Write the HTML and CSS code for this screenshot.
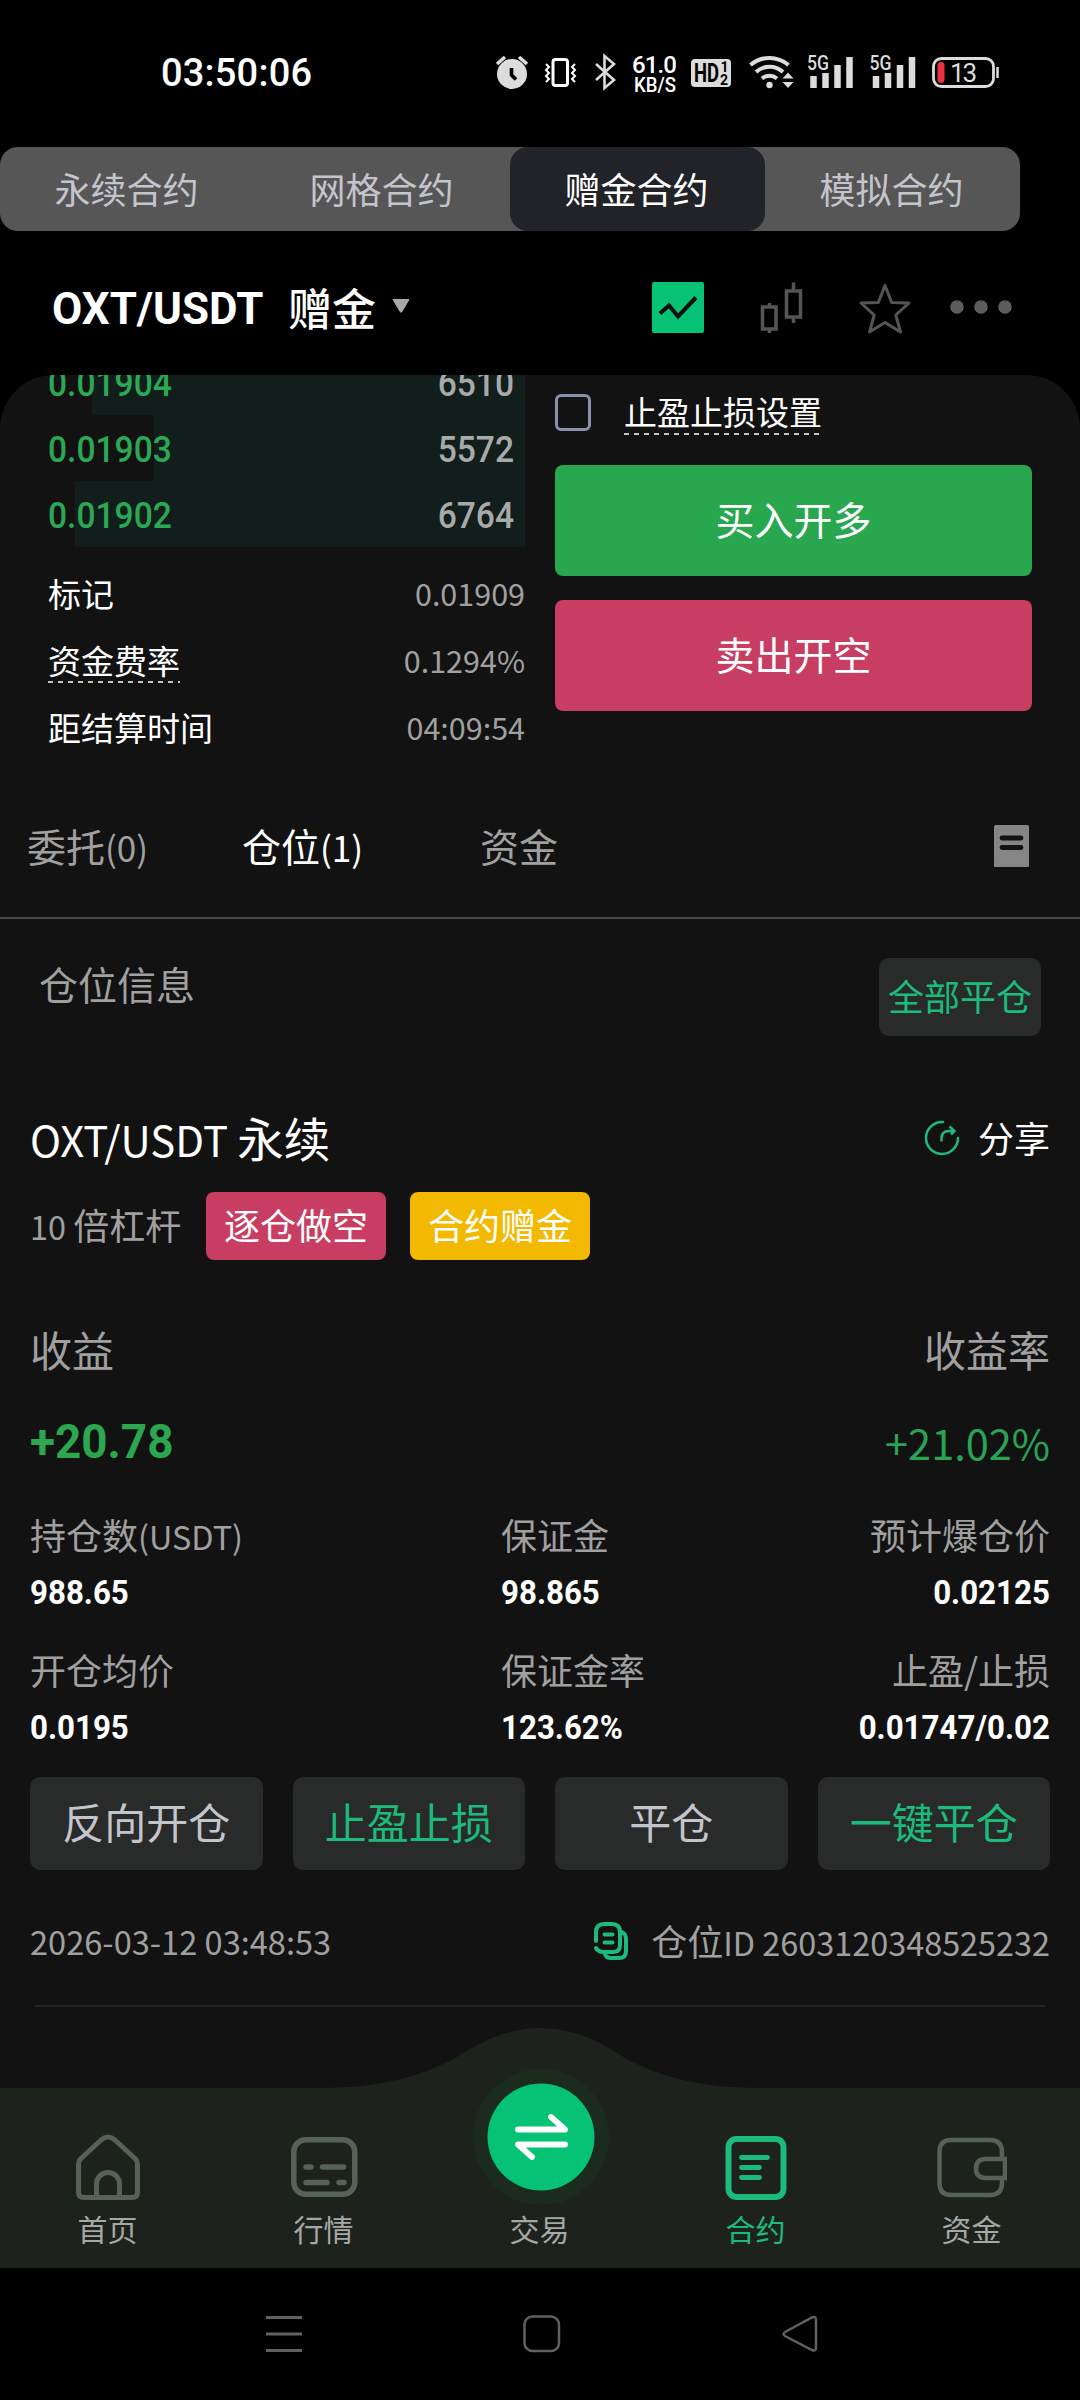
FILE: index.html
```html
<!DOCTYPE html>
<html lang="zh-CN">
<head>
<meta charset="utf-8">
<title>OXT/USDT 赠金</title>
<link rel="stylesheet" href="styles.css">
</head>
<body>
<header class="status">
  <span class="clock">03:50:06</span>
  <svg class="status-icons" viewBox="490 45 520 55" width="520" height="55">
    <g fill="#dcdcdc">
      <circle cx="512" cy="74" r="15"/>
      <path d="M497 64l8-7M527 64l-8-7" stroke="#dcdcdc" stroke-width="3.6" fill="none"/>
      <path d="M511.500 68v7l4.500 4.500" stroke="#000" stroke-width="3.600" fill="none"/>
    </g>
    <rect x="553" y="59.500" width="14.500" height="26" rx="2.500" fill="none" stroke="#fff" stroke-width="3"/>
    <path d="M546 64l3 3-3 3 3 3-3 3 3 3-3 3M575 64l-3 3 3 3-3 3 3 3-3 3 3 3" fill="none" stroke="#fff" stroke-width="2"/>
    <path d="M596 64l18 16-9.500 8V56l9.500 8-18 16" fill="none" stroke="#dcdcdc" stroke-width="2.600"/>
    <text class="t-speed" x="632" y="73" textLength="45">61.0</text>
    <text class="t-unit" x="634" y="91.500" textLength="42" lengthAdjust="spacingAndGlyphs">KB/S</text>
    <rect x="691" y="59" width="40" height="28" rx="4" fill="#dcdcdc"/>
    <text class="t-hd" x="694" y="82" textLength="25" lengthAdjust="spacingAndGlyphs">HD</text>
    <text class="t-sub" x="720.500" y="72">1</text>
    <text class="t-sub" x="720" y="85">2</text>
    <g fill="none" stroke="#dcdcdc" stroke-width="4">
      <path d="M750.500 65a29 29 0 0 1 38 0"/>
      <path d="M756 72a20 20 0 0 1 27 0"/>
      <path d="M762 78.500a12 12 0 0 1 15 0"/>
    </g>
    <circle cx="769.500" cy="85" r="3.200" fill="#dcdcdc"/>
    <path d="M782.500 78.500h11l-5.500-6zM782.500 82h11l-5.500 6z" fill="#dcdcdc"/>
    <g id="signal">
      <text class="t-5g" x="807" y="70" textLength="22" lengthAdjust="spacingAndGlyphs">5G</text>
      <path d="M813.500 76v12M825.500 73v15M837.500 65v23M849.500 57v31" stroke="#dcdcdc" stroke-width="6.500"/>
    </g>
    <use href="#signal" x="62.500"/>
    <rect x="933.500" y="58.500" width="60" height="28" rx="8" fill="none" stroke="#dcdcdc" stroke-width="2.800"/>
    <rect x="937.500" y="62" width="7" height="21" rx="3.500" fill="#ee2e42"/>
    <path d="M997.500 67v11" stroke="#dcdcdc" stroke-width="2.500"/>
    <text class="t-batt" x="950" y="81.500" textLength="27">13</text>
  </svg>
</header>

<nav class="modes">
  <span class="mode">永续合约</span>
  <span class="mode">网格合约</span>
  <span class="mode mode-on">赠金合约</span>
  <span class="mode">模拟合约</span>
</nav>

<section class="symbol">
  <span class="pair din">OXT/USDT</span>
  <span class="bonus">赠金</span>
  <svg class="caret" width="20" height="16" viewBox="0 0 20 16"><path d="M2 1.500h16l-7 12q-1 1.500-2 0z" fill="#a8a8a8" stroke="#a8a8a8" stroke-linejoin="round"/></svg>
  <svg class="tools" width="370" height="60" viewBox="650 276 370 60">
    <rect x="652" y="281" width="52" height="51" rx="2" fill="#05c274"/>
    <path d="M660 312.500l9-8 9 11 18-19" fill="none" stroke="#0c0f0d" stroke-width="4"/>
    <g fill="none" stroke="#555" stroke-width="3.500">
      <path d="M762.500 306h13.500v22h-13.500zM769.500 302v4M769.500 328v4M786.500 290h14v26h-14zM793.500 281.500v9M793.500 316v6"/>
      <path d="M885 284.500l6.700 17 17.300.5-13.200 12 4.700 17-15.500-9.500-15.500 9.500 4.700-17-13.200-12 17.300-.5z" stroke-width="3" stroke-linejoin="round"/>
    </g>
    <g fill="#5d5d5d"><circle cx="957" cy="306" r="6.800"/><circle cx="981" cy="306" r="6.800"/><circle cx="1005" cy="306" r="6.800"/></g>
  </svg>
</section>

<main class="panel">
  <section class="trade">
    <div class="book">
      <div class="level" style="background-size:433px 100%"><span class="din price">0.01904</span><span class="din qty">6510</span></div>
      <div class="level" style="background-size:371px 100%"><span class="din price">0.01903</span><span class="din qty">5572</span></div>
      <div class="level" style="background-size:450px 100%"><span class="din price">0.01902</span><span class="din qty">6764</span></div>
      <dl class="info">
        <div><dt>标记</dt><dd>0.01909</dd></div>
        <div><dt><span class="hint">资金费率</span></dt><dd>0.1294%</dd></div>
        <div><dt>距结算时间</dt><dd>04:09:54</dd></div>
      </dl>
    </div>
    <div class="order">
      <label class="tpsl"><i class="box"></i><span class="hint">止盈止损设置</span></label>
      <button class="buy">买入开多</button>
      <button class="sell">卖出开空</button>
    </div>
  </section>

  <nav class="tabs">
    <span class="tab">委托<span class="lat">(0)</span></span>
    <span class="tab tab-on">仓位<span class="lat">(1)</span></span>
    <span class="tab">资金</span>
    <svg class="orders" width="35" height="42" viewBox="0 0 35 42"><rect width="35" height="42" rx="1.500" fill="#858585"/><path d="M8 13h19M8 22.500h19" stroke="#121212" stroke-width="4.800" stroke-linecap="round"/></svg>
  </nav>

  <div class="list-head">
    <span class="list-title">仓位信息</span>
    <button class="close-all">全部平仓</button>
  </div>

  <article class="card">
    <div class="title">
      <span><span class="lat">OXT/USDT </span>永续</span>
      <span class="share">
        <svg width="36" height="36" viewBox="0 0 36 36" fill="none" stroke="#1cba7b" stroke-width="2.500"><path d="M19 2A16 16 0 1 0 34 18" stroke-linecap="round"/><path d="M17.500 21.500v-3q0-7.500 7.500-7.500h4M25.500 6.500l5 4.500-3.500 3.500"/></svg>
        <span>分享</span>
      </span>
    </div>
    <div class="tags">
      <span class="lever"><span class="lat">10 </span>倍杠杆</span>
      <span class="tag tag-short">逐仓做空</span>
      <span class="tag tag-bonus">合约赠金</span>
    </div>
    <div class="pnl-head"><span>收益</span><span>收益率</span></div>
    <div class="pnl"><span class="din gain">+20.78</span><span class="rate">+21.02%</span></div>
    <div class="stats">
      <div><p>持仓数<span class="lat">(USDT)</span></p><b class="din">988.65</b></div>
      <div><p>保证金</p><b class="din">98.865</b></div>
      <div><p>预计爆仓价</p><b class="din">0.02125</b></div>
      <div><p>开仓均价</p><b class="din">0.0195</b></div>
      <div><p>保证金率</p><b class="din">123.62%</b></div>
      <div><p>止盈/止损</p><b class="din">0.01747/0.02</b></div>
    </div>
    <div class="actions">
      <button>反向开仓</button>
      <button class="accent">止盈止损</button>
      <button>平仓</button>
      <button class="accent">一键平仓</button>
    </div>
    <div class="meta">
      <span class="date">2026-03-12 03:48:53</span>
      <span class="pid">
        <svg width="36" height="40" viewBox="0 0 36 40" fill="none" stroke="#1cba7b" stroke-width="4" stroke-linecap="round"><path d="M3 20V11q0-8 8-8h8q8 0 8 8v13q0 7-7 7h-9q-6 0-8-4"/><path d="M29 11q4 2 4 7v12q0 7-7 7h-8q-5 0-6-4"/><path d="M11.500 13.500h8M11.500 21.500h8"/></svg>
        <span>仓位<span class="lat">ID 2603120348525232</span></span>
      </span>
    </div>
    <hr>
  </article>
</main>

<nav class="dock">
  <svg class="hump" width="1080" height="60" viewBox="0 0 1080 60"><path d="M320 60C378 60 420 49 455 30C485 11 510 0 540 0S597 11 625 30C660 49 702 60 760 60z" fill="#1d221d"/></svg>
  <div class="item">
    <svg width="70" height="70" viewBox="0 0 70 70" fill="none" stroke="#566256" stroke-width="5"><path d="M5.500 31q0-3 2-5L28 7q7-6 14 0l20.500 19q2 2 2 5v28q0 5.500-5.500 5.500H11Q5.500 64.500 5.500 59z"/><path d="M23.500 64V51a11.500 11.500 0 0 1 23 0v13"/></svg>
    <span>首页</span>
  </div>
  <div class="item">
    <svg width="70" height="70" viewBox="0 0 70 70" fill="none" stroke="#566256" stroke-width="5.500"><rect x="4.800" y="6.800" width="61" height="54.500" rx="12"/><path d="M17 34h5M33.500 34h21M17 49.500h21M50 49.500h5" stroke-linecap="round"/></svg>
    <span>行情</span>
  </div>
  <div class="item">
    <svg class="swap" width="140" height="140" viewBox="-71 -71 140 140"><circle r="68" fill="#1b2b1e"/><circle r="53.500" fill="#05c274"/><path d="M-23-7.500H24L10-20M24 7.500H-23L-9 20" fill="none" stroke="#fff" stroke-width="5.800" stroke-linecap="round" stroke-linejoin="round"/></svg>
    <span>交易</span>
  </div>
  <div class="item item-on">
    <svg width="70" height="70" viewBox="0 0 70 70" fill="none" stroke="#1cba7b" stroke-width="6"><rect x="7.500" y="6" width="55" height="58" rx="8"/><path d="M20.500 24.500h26M20.500 34.500h18M20.500 44.500h18" stroke-width="4.800" stroke-linecap="round"/></svg>
    <span>合约</span>
  </div>
  <div class="item">
    <svg width="70" height="70" viewBox="1 0 70 70" fill="none" stroke="#566256" stroke-width="4.500"><path d="M66 26v-7q0-12-12-12H15Q3.500 7 3.500 19v31q0 12 11.500 12h39q12 0 12-12v-4"/><path d="M69 26H50q-10 0-10 9.500t10 9.500h19z"/></svg>
    <span>资金</span>
  </div>
</nav>

<footer class="sysnav">
  <svg width="38" height="38" viewBox="0 0 38 38" stroke="#606060" stroke-width="3"><path d="M1 2.500h36M1 19h36M1 35.500h36"/></svg>
  <svg width="38" height="38" viewBox="0 0 38 38" fill="none" stroke="#606060" stroke-width="2.500"><rect x="1.500" y="1.500" width="34.500" height="34.500" rx="8"/></svg>
  <svg width="38" height="38" viewBox="0 0 38 38" fill="none" stroke="#606060" stroke-width="2.500"><path d="M4 17L31 2.500q4-1.500 4 2V33q0 3.500-4 2L4 21q-3-2 0-4z"/></svg>
</footer>
</body>
</html>
```
FILE: styles.css
```css
* { box-sizing: border-box; }
body {
  margin: 0;
  width: 1080px;
  height: 2400px;
  background: #000;
  color: #fff;
  font-family: "Noto Sans CJK SC", sans-serif;
  overflow: hidden;
}
button {
  border: 0;
  padding: 0;
  font: inherit;
  color: #fff;
}
svg { flex: none; }
p, dl, dd { margin: 0; }
.din {
  font-family: Roboto, sans-serif;
  display: inline-block;
  transform: scaleX(.92);
  transform-origin: left center;
}
.lat { font-size: .9em; line-height: 1; }

.status { height: 147px; display: flex; padding-left: 161px; }
.clock {
  width: 329px;
  margin-top: 50px;
  font: 500 38px/46px Roboto, sans-serif;
  letter-spacing: .2px;
}
.status-icons { margin-top: 45px; }
.status-icons text { font-family: Roboto, sans-serif; font-weight: 500; fill: #fff; }
.status-icons .t-speed { font-size: 24px; }
.status-icons .t-unit { font-size: 20px; }
.status-icons .t-hd { font-size: 25px; font-weight: 700; fill: #000; }
.status-icons .t-sub { font-size: 14px; font-weight: 700; fill: #000; }
.status-icons .t-5g { font-size: 21px; fill: #dcdcdc; }
.status-icons .t-batt { font-size: 26px; font-weight: 400; fill: #dcdcdc; }

.modes {
  width: 1020px;
  height: 84px;
  display: grid;
  grid-template-columns: repeat(4, 1fr);
  background: #565656;
  border-radius: 18px;
}
.mode {
  font-size: 36px;
  line-height: 82px;
  text-align: center;
  color: #c4c4cc;
  padding-right: 2px;
}
.mode-on { background: #222328; color: #fff; border-radius: 18px; }

.symbol { height: 144px; display: flex; align-items: center; padding: 9px 0 0 52px; line-height: 60px; }
.pair { width: 236px; margin-top: 3px; font-size: 45px; font-weight: 700; transform: scaleX(.975); }
.bonus { width: 102px; font-size: 44px; font-weight: 500; margin-top: -2px; }
.caret { margin: -3px 0 0 1px; }
.tools { margin: -1px 0 0 239px; }

.panel {
  height: 1713px;
  background: #121212;
  border-radius: 54px 54px 0 0;
  overflow: hidden;
}
.trade { height: 385px; display: flex; padding-left: 48px; }
.book { width: 477px; margin-top: -26px; }
.level {
  height: 66px;
  display: flex;
  justify-content: space-between;
  padding-right: 11px;
  font-size: 36.5px;
  font-weight: 500;
  line-height: 70px;
  background: linear-gradient(#121e1c, #121e1c) right top no-repeat;
}
.price { color: #2ba855; }
.qty { color: #a8aaa9; transform-origin: right center; }
.info { margin-top: 12px; }
.info div { height: 67px; display: flex; justify-content: space-between; align-items: center; }
.info dt { font-size: 33px; line-height: 40px; }
.info dd { font-size: 30.5px; line-height: 40px; color: #a0a0a0; }
.hint {
  padding-bottom: 1px;
  background: repeating-linear-gradient(90deg, #c4c4c4 0 5px, transparent 5px 10px) left bottom / 100% 2px no-repeat;
}
.info .hint { display: block; height: 43px; margin-bottom: -3px; }
.order { width: 477px; margin-left: 30px; padding-top: 15px; display: flex; flex-direction: column; }
.tpsl { height: 75px; display: flex; align-items: flex-start; font-size: 33px; line-height: 43px; }
.tpsl .hint { height: 45px; }
.box { width: 36px; height: 37px; margin: 4px 33px 0 0; border: 3px solid #8a8fae; border-radius: 6px; }
.buy, .sell { height: 111px; border-radius: 8px; font-size: 39px; line-height: 40px; padding-bottom: 5px; }
.buy { background: #28a74f; }
.sell { margin-top: 24px; background: #c83e62; }

.tabs {
  height: 159px;
  display: flex;
  align-items: flex-start;
  padding: 65px 0 0 27px;
  border-bottom: 2px solid #484848;
  font-size: 39px;
  line-height: 40px;
  color: #a0a0a0;
}
.tab:nth-child(1) { width: 215px; }
.tab:nth-child(2) { width: 238px; }
.tab:nth-child(3) { width: 514px; }
.tab-on { color: #fff; }

.list-head { height: 194px; display: flex; justify-content: space-between; padding: 39px 39px 0 39px; }
.list-title { margin-top: 5px; font-size: 39px; line-height: 40px; color: #a0a0a0; }
.close-all { width: 162px; height: 78px; border-radius: 10px; background: #292a2a; color: #1cba7b; font-size: 36px; line-height: 40px; padding-bottom: 4px; }

.card { padding: 0 30px; }
.title { height: 50px; display: flex; justify-content: space-between; font-size: 46.5px; line-height: 48px; }
.share { display: flex; align-items: center; gap: 18px; font-size: 36px; }
.share span { margin-top: -2px; }
.tags { height: 68px; margin-top: 29px; display: flex; font-size: 36px; line-height: 65px; }
.lever { width: 176px; color: #a0a0a0; }
.tag { width: 180px; border-radius: 8px; text-align: center; }
.tag-short { background: #c83e62; }
.tag-bonus { background: #f3b900; margin-left: 24px; }
.pnl-head, .pnl { display: flex; justify-content: space-between; height: 50px; line-height: 50px; }
.pnl-head { margin-top: 64px; font-size: 42px; color: #a0a0a0; }
.pnl { margin-top: 43px; }
.gain { font-size: 48px; font-weight: 700; color: #2ba84f; transform: scaleX(.955); }
.rate { font-size: 41.5px; color: #29a356; }
.stats {
  margin-top: 47px;
  display: grid;
  grid-template-columns: 471px 249px 300px;
  grid-auto-rows: 98px;
  row-gap: 37px;
  line-height: 40px;
}
.stats div { display: flex; flex-direction: column; gap: 18px; align-items: flex-start; }
.stats div:nth-child(3n) { align-items: flex-end; }
.stats div:nth-child(3n) .din { transform-origin: right center; }
.stats p { height: 40px; font-size: 36px; color: #a0a0a0; white-space: nowrap; }
.stats b { font-size: 34px; }
.actions { margin-top: 30px; display: grid; grid-template-columns: repeat(4, 1fr); gap: 30px; }
.actions button { height: 93px; border-radius: 10px; background: #292a2a; color: #c4c4cc; font-size: 42px; line-height: 44px; padding-bottom: 5px; }
.actions .accent { color: #1cba7b; }
.meta { height: 40px; margin-top: 51px; display: flex; justify-content: space-between; font-size: 36px; line-height: 40px; color: #a0a0a0; }
.date { font-size: 32.6px; }
.pid { display: flex; gap: 22px; }
.pid > span { margin-top: -1px; }
.card hr { margin: 44px 5px 0; border: 0; height: 2px; background: #242424; }

.dock { position: relative; height: 180px; background: #1d221d; display: grid; grid-template-columns: repeat(5, 1fr); }
.hump { position: absolute; left: 0; top: -60px; }
.item {
  position: relative;
  display: flex;
  flex-direction: column;
  align-items: center;
  padding: 45px 1px 0 0;
  font-size: 30px;
  line-height: 30px;
  color: #a5a8a5;
}
.item span { margin-top: 10px; }
.item-on { color: #1cba7b; }
.swap { margin: -67px 0 -3px; }

.sysnav { height: 132px; display: flex; justify-content: center; gap: 220px; padding: 47px 0 0 4px; }
```
